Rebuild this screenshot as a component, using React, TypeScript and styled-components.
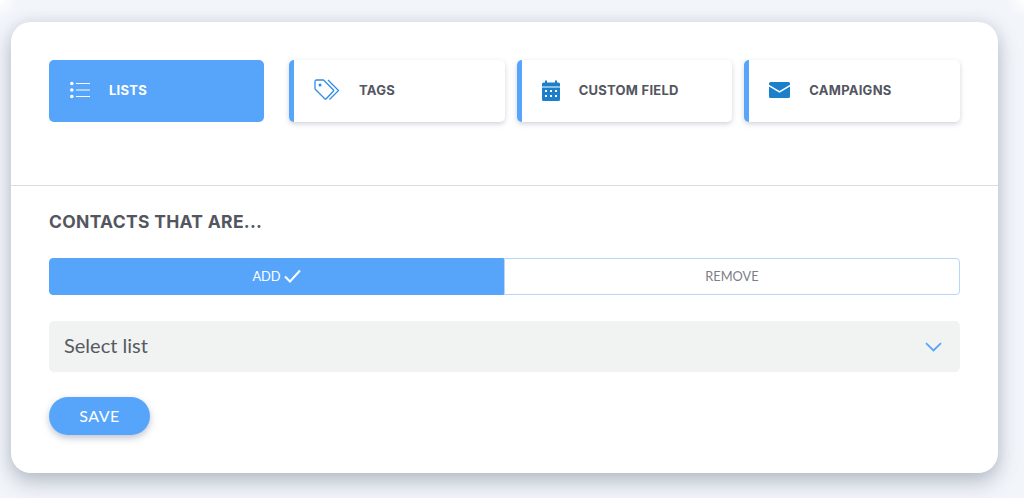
import React from "react";
import styled, { createGlobalStyle } from "styled-components";

const GlobalStyle = createGlobalStyle`
  html, body {
    margin: 0;
    padding: 0;
    height: 100%;
    background: #f2f5fa;
    overflow: hidden;
  }
`;

const Page = styled.div`
  box-sizing: border-box;
  width: 1024px;
  height: 498px;
  padding: 22px 26px 0 11px;
  background:
    radial-gradient(circle at 0 0, #fff 0, rgba(255, 255, 255, 0) 16px),
    radial-gradient(circle at 100% 0, #fff 0, rgba(255, 255, 255, 0) 16px);
`;

const Card = styled.div`
  background: #fff;
  border-radius: 20px;
  height: 451px;
  box-shadow: 0 10px 20px rgba(120, 130, 145, 0.42), 0 0 14px rgba(150, 160, 175, 0.25);
`;

const TabSection = styled.div`
  display: flex;
  gap: 12px;
  padding: 38px 38px 63px;
  border-bottom: 1px solid #d9dce2;
`;

const Tab = styled.div<{ $active?: boolean }>`
  flex: ${(p) => (p.$active ? "0 0 215px" : "1")};
  height: 62px;
  box-sizing: border-box;
  display: flex;
  align-items: center;
  gap: 19px;
  padding-left: ${(p) => (p.$active ? "16px" : "20px")};
  padding-bottom: 2px;
  margin-right: ${(p) => (p.$active ? "13px" : "0")};
  border-left: 5px solid #57a5fa;
  border-radius: 5px;
  background: ${(p) => (p.$active ? "#57a5fa" : "#fff")};
  color: ${(p) => (p.$active ? "#fff" : "#54565f")};
  box-shadow: ${(p) => (p.$active ? "none" : "0 2px 5px rgba(120, 130, 150, 0.35)")};
`;

const TabLabel = styled.span`
  font-family: "Inter", "Liberation Sans", sans-serif;
  font-weight: 700;
  font-size: 13px;
  letter-spacing: 0.25px;
`;

const FormSection = styled.div`
  padding: 26px 38px 38px;
`;

const Heading = styled.h2`
  margin: 0;
  font-family: "Inter", "Liberation Sans", sans-serif;
  font-weight: 700;
  font-size: 17.5px;
  letter-spacing: 0.3px;
  line-height: 20px;
  color: #54565f;
`;

const Toggle = styled.div`
  display: flex;
  height: 37px;
  margin-top: 26px;
`;

const ToggleOption = styled.div<{ $on?: boolean }>`
  flex: ${(p) => (p.$on ? "0 0 455px" : "1")};
  box-sizing: border-box;
  display: flex;
  align-items: center;
  justify-content: center;
  gap: 3px;
  padding-bottom: 2px;
  font-family: "Lato", sans-serif;
  font-size: 12.8px;
  background: ${(p) => (p.$on ? "#57a5fa" : "#fff")};
  color: ${(p) => (p.$on ? "#fff" : "#7d7e86")};
  border: 1px solid ${(p) => (p.$on ? "#57a5fa" : "#b5d6fb")};
  border-radius: ${(p) => (p.$on ? "4px 0 0 4px" : "0 4px 4px 0")};
`;

const SelectBox = styled.div`
  display: flex;
  align-items: center;
  justify-content: space-between;
  height: 51px;
  margin-top: 26px;
  padding: 0 18px 0 15px;
  background: #f1f2f2;
  border-radius: 5px;
  font-family: "Lato", sans-serif;
  font-size: 20px;
  color: #565a61;
`;

const SelectText = styled.span`
  margin-bottom: 3px;
`;

const SaveButton = styled.button`
  display: block;
  width: 101px;
  height: 38px;
  margin-top: 25px;
  padding: 0 0 2px;
  border: none;
  border-radius: 19px;
  background: #57a5fa;
  color: #fff;
  font-family: "Lato", sans-serif;
  font-size: 16px;
  letter-spacing: 0.45px;
  box-shadow: 0 3px 7px rgba(110, 125, 150, 0.45);
`;

const ListIcon = () => (
  <svg width="20" height="18" viewBox="0 0 20 18" fill="none">
    <circle cx="1.8" cy="2.5" r="1.8" fill="#fff" />
    <circle cx="1.8" cy="9" r="1.8" fill="#fff" />
    <circle cx="1.8" cy="15.5" r="1.8" fill="#fff" />
    <path d="M6 2.5h14M6 9h14M6 15.5h14" stroke="#fff" strokeWidth="1" />
  </svg>
);

const TagsIcon = () => (
  <svg width="26" height="22" viewBox="0 0 26 22" fill="none" stroke="#2f8ce8" strokeWidth="1.3">
    <path d="M1 2.5 A1.5 1.5 0 0 1 2.5 1 H9.5 L19.5 11 Q20 11.5 19.5 12 L12 20 Q11.5 20.5 11 20 L1.5 10.5 Q1 10 1 9.5 Z" strokeLinejoin="round" />
    <circle cx="6" cy="6" r="1.5" fill="#2f8ce8" stroke="none" />
    <path d="M14 1 L24.5 11.5 L15.5 20.5" strokeLinejoin="round" />
  </svg>
);

const CalendarIcon = () => (
  <svg width="18" height="21" viewBox="0 0 18 21">
    <path d="M3 0.5h2v2h8v-2h2v2h1.5A1.5 1.5 0 0 1 18 4v2.5H0V4a1.5 1.5 0 0 1 1.5-1.5H3z" fill="#1c7fca" />
    <path fillRule="evenodd" fill="#1c7fca" d="M0 7.5h18V19.5a1.5 1.5 0 0 1-1.5 1.5H1.5A1.5 1.5 0 0 1 0 19.5z M3 10v2h2v-2z M8 10v2h2v-2z M13 10v2h2v-2z M3 15v2h2v-2z M8 15v2h2v-2z M13 15v2h2v-2z" />
  </svg>
);

const MailIcon = () => (
  <svg width="21" height="16" viewBox="0 0 21 16">
    <path d="M1.5 0h18A1.5 1.5 0 0 1 21 1.5v1.2L10.5 9 0 2.7V1.5A1.5 1.5 0 0 1 1.5 0z" fill="#1c7fca" />
    <path d="M0 4.4 10.5 10.7 21 4.4V14.5a1.5 1.5 0 0 1-1.5 1.5h-18A1.5 1.5 0 0 1 0 14.5z" fill="#1c7fca" />
  </svg>
);

const CheckIcon = () => (
  <svg width="17" height="14" viewBox="0 0 17 14" fill="none">
    <path d="M1 7.5 6 12.5 16 1.5" stroke="#fff" strokeWidth="2" />
  </svg>
);

const ChevronIcon = () => (
  <svg width="17" height="10" viewBox="0 0 17 10" fill="none">
    <path d="M1 1.2 8.5 8.5 16 1.2" stroke="#57a5fa" strokeWidth="1.8" />
  </svg>
);

const App: React.FC = () => {
  return (
    <Page>
      <GlobalStyle />
      <Card>
        <TabSection>
          <Tab $active>
            <ListIcon />
            <TabLabel>LISTS</TabLabel>
          </Tab>
          <Tab>
            <TagsIcon />
            <TabLabel>TAGS</TabLabel>
          </Tab>
          <Tab>
            <CalendarIcon />
            <TabLabel>CUSTOM FIELD</TabLabel>
          </Tab>
          <Tab>
            <MailIcon />
            <TabLabel>CAMPAIGNS</TabLabel>
          </Tab>
        </TabSection>
        <FormSection>
          <Heading>CONTACTS THAT ARE...</Heading>
          <Toggle>
            <ToggleOption $on>
              ADD <CheckIcon />
            </ToggleOption>
            <ToggleOption>REMOVE</ToggleOption>
          </Toggle>
          <SelectBox>
            <SelectText>Select list</SelectText>
            <ChevronIcon />
          </SelectBox>
          <SaveButton>SAVE</SaveButton>
        </FormSection>
      </Card>
    </Page>
  );
};

export default App;
